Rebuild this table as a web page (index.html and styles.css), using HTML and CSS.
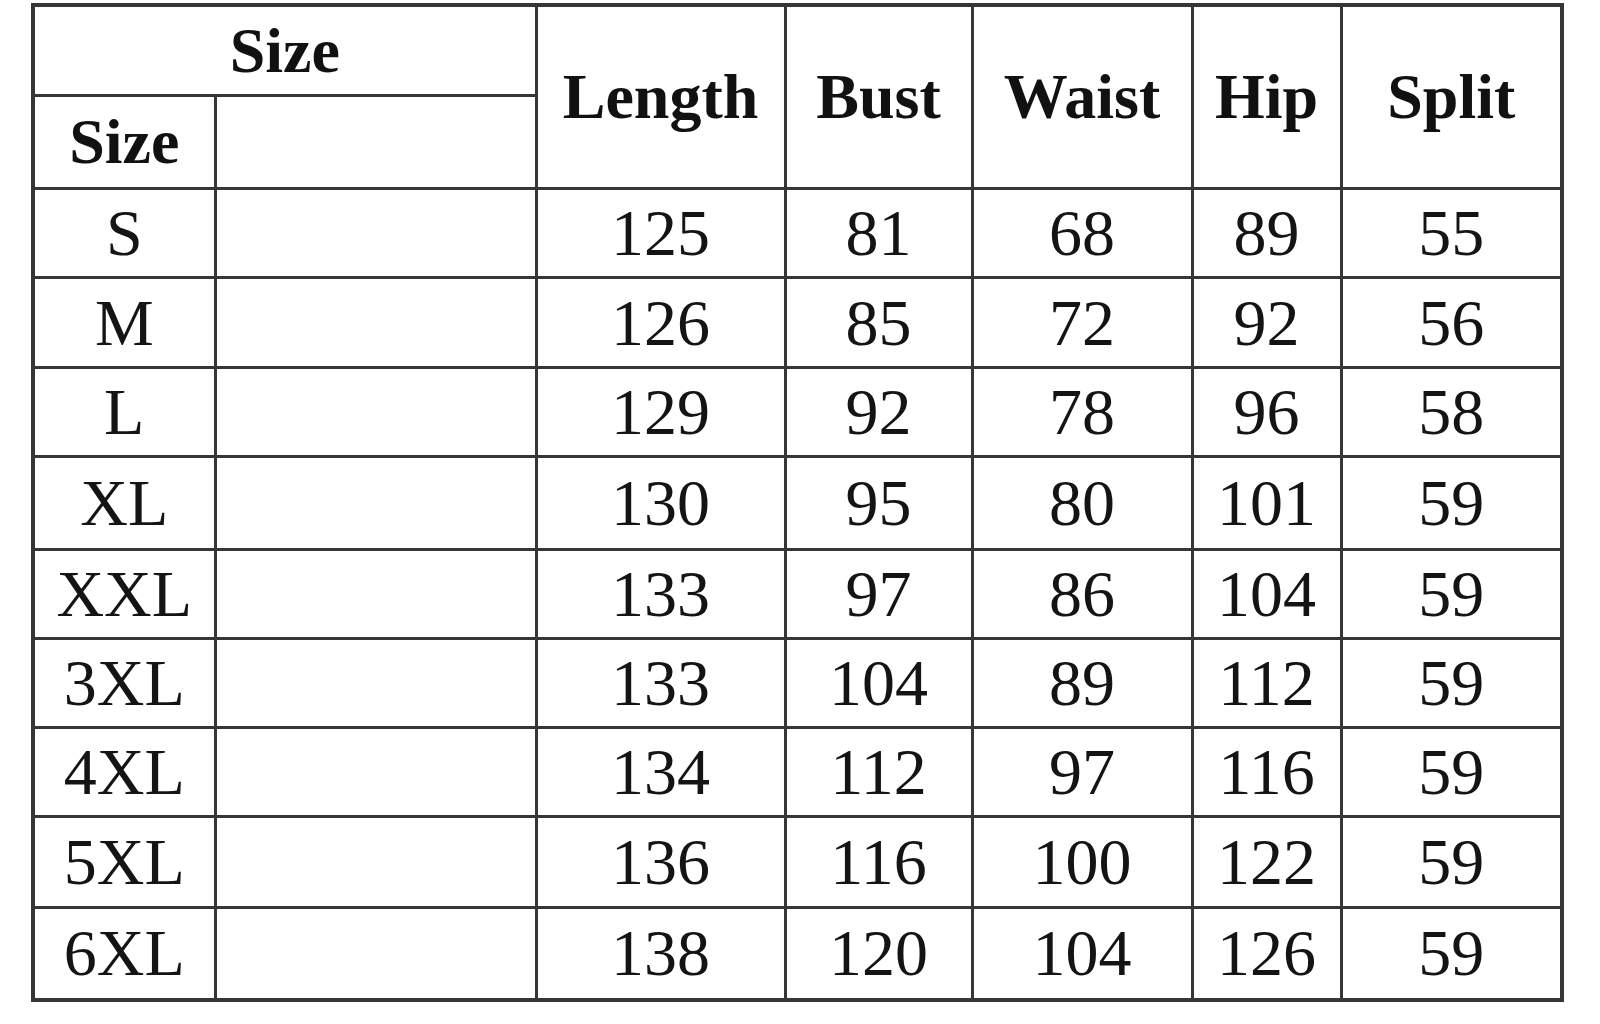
FILE: index.html
```html
<!DOCTYPE html>
<html lang="en">
<head>
<meta charset="utf-8">
<title>Size Chart</title>
<link rel="stylesheet" href="styles.css">
</head>
<body>
<table class="chart">
  <colgroup>
    <col class="c-size">
    <col class="c-blank">
    <col class="c-length">
    <col class="c-bust">
    <col class="c-waist">
    <col class="c-hip">
    <col class="c-split">
  </colgroup>
  <thead>
    <tr class="h1">
      <th colspan="2">Size</th>
      <th rowspan="2">Length</th>
      <th rowspan="2">Bust</th>
      <th rowspan="2">Waist</th>
      <th rowspan="2">Hip</th>
      <th rowspan="2">Split</th>
    </tr>
    <tr class="h2">
      <th>Size</th>
      <th></th>
    </tr>
  </thead>
  <tbody>
    <tr><td>S</td><td></td><td>125</td><td>81</td><td>68</td><td>89</td><td>55</td></tr>
    <tr class="r90"><td>M</td><td></td><td>126</td><td>85</td><td>72</td><td>92</td><td>56</td></tr>
    <tr><td>L</td><td></td><td>129</td><td>92</td><td>78</td><td>96</td><td>58</td></tr>
    <tr class="r93"><td>XL</td><td></td><td>130</td><td>95</td><td>80</td><td>101</td><td>59</td></tr>
    <tr><td>XXL</td><td></td><td>133</td><td>97</td><td>86</td><td>104</td><td>59</td></tr>
    <tr><td>3XL</td><td></td><td>133</td><td>104</td><td>89</td><td>112</td><td>59</td></tr>
    <tr><td>4XL</td><td></td><td>134</td><td>112</td><td>97</td><td>116</td><td>59</td></tr>
    <tr class="r91"><td>5XL</td><td></td><td>136</td><td>116</td><td>100</td><td>122</td><td>59</td></tr>
    <tr class="r92"><td>6XL</td><td></td><td>138</td><td>120</td><td>104</td><td>126</td><td>59</td></tr>
  </tbody>
</table>
</body>
</html>
```

FILE: styles.css
```css
html, body {
  margin: 0;
  padding: 0;
  background: #ffffff;
}

body {
  padding: 3px 0 0 31px;
  font-family: "Liberation Serif", "Times New Roman", serif;
  color: #141414;
}

.chart {
  border-collapse: collapse;
  table-layout: fixed;
  width: 1529px;
  border: 4px solid #363636;
}

.c-size { width: 182px; }
.c-blank { width: 321px; }
.c-length { width: 249px; }
.c-bust { width: 187px; }
.c-waist { width: 220px; }
.c-hip { width: 149px; }
.c-split { width: 221px; }

.chart th,
.chart td {
  border: 3px solid #363636;
  padding: 0;
  text-align: center;
  vertical-align: middle;
  line-height: 1;
  overflow: hidden;
  white-space: nowrap;
}

.chart th {
  font-weight: bold;
  font-size: 64px;
  color: #111111;
}

.chart td {
  font-weight: normal;
  font-size: 66px;
}

.h1 th { height: 87px; }
.h2 th { height: 90px; }

.chart tbody tr { height: 89px; }
.chart tbody tr.r90 { height: 90px; }
.chart tbody tr.r91 { height: 91px; }
.chart tbody tr.r92 { height: 92px; }
.chart tbody tr.r93 { height: 93px; }
```
